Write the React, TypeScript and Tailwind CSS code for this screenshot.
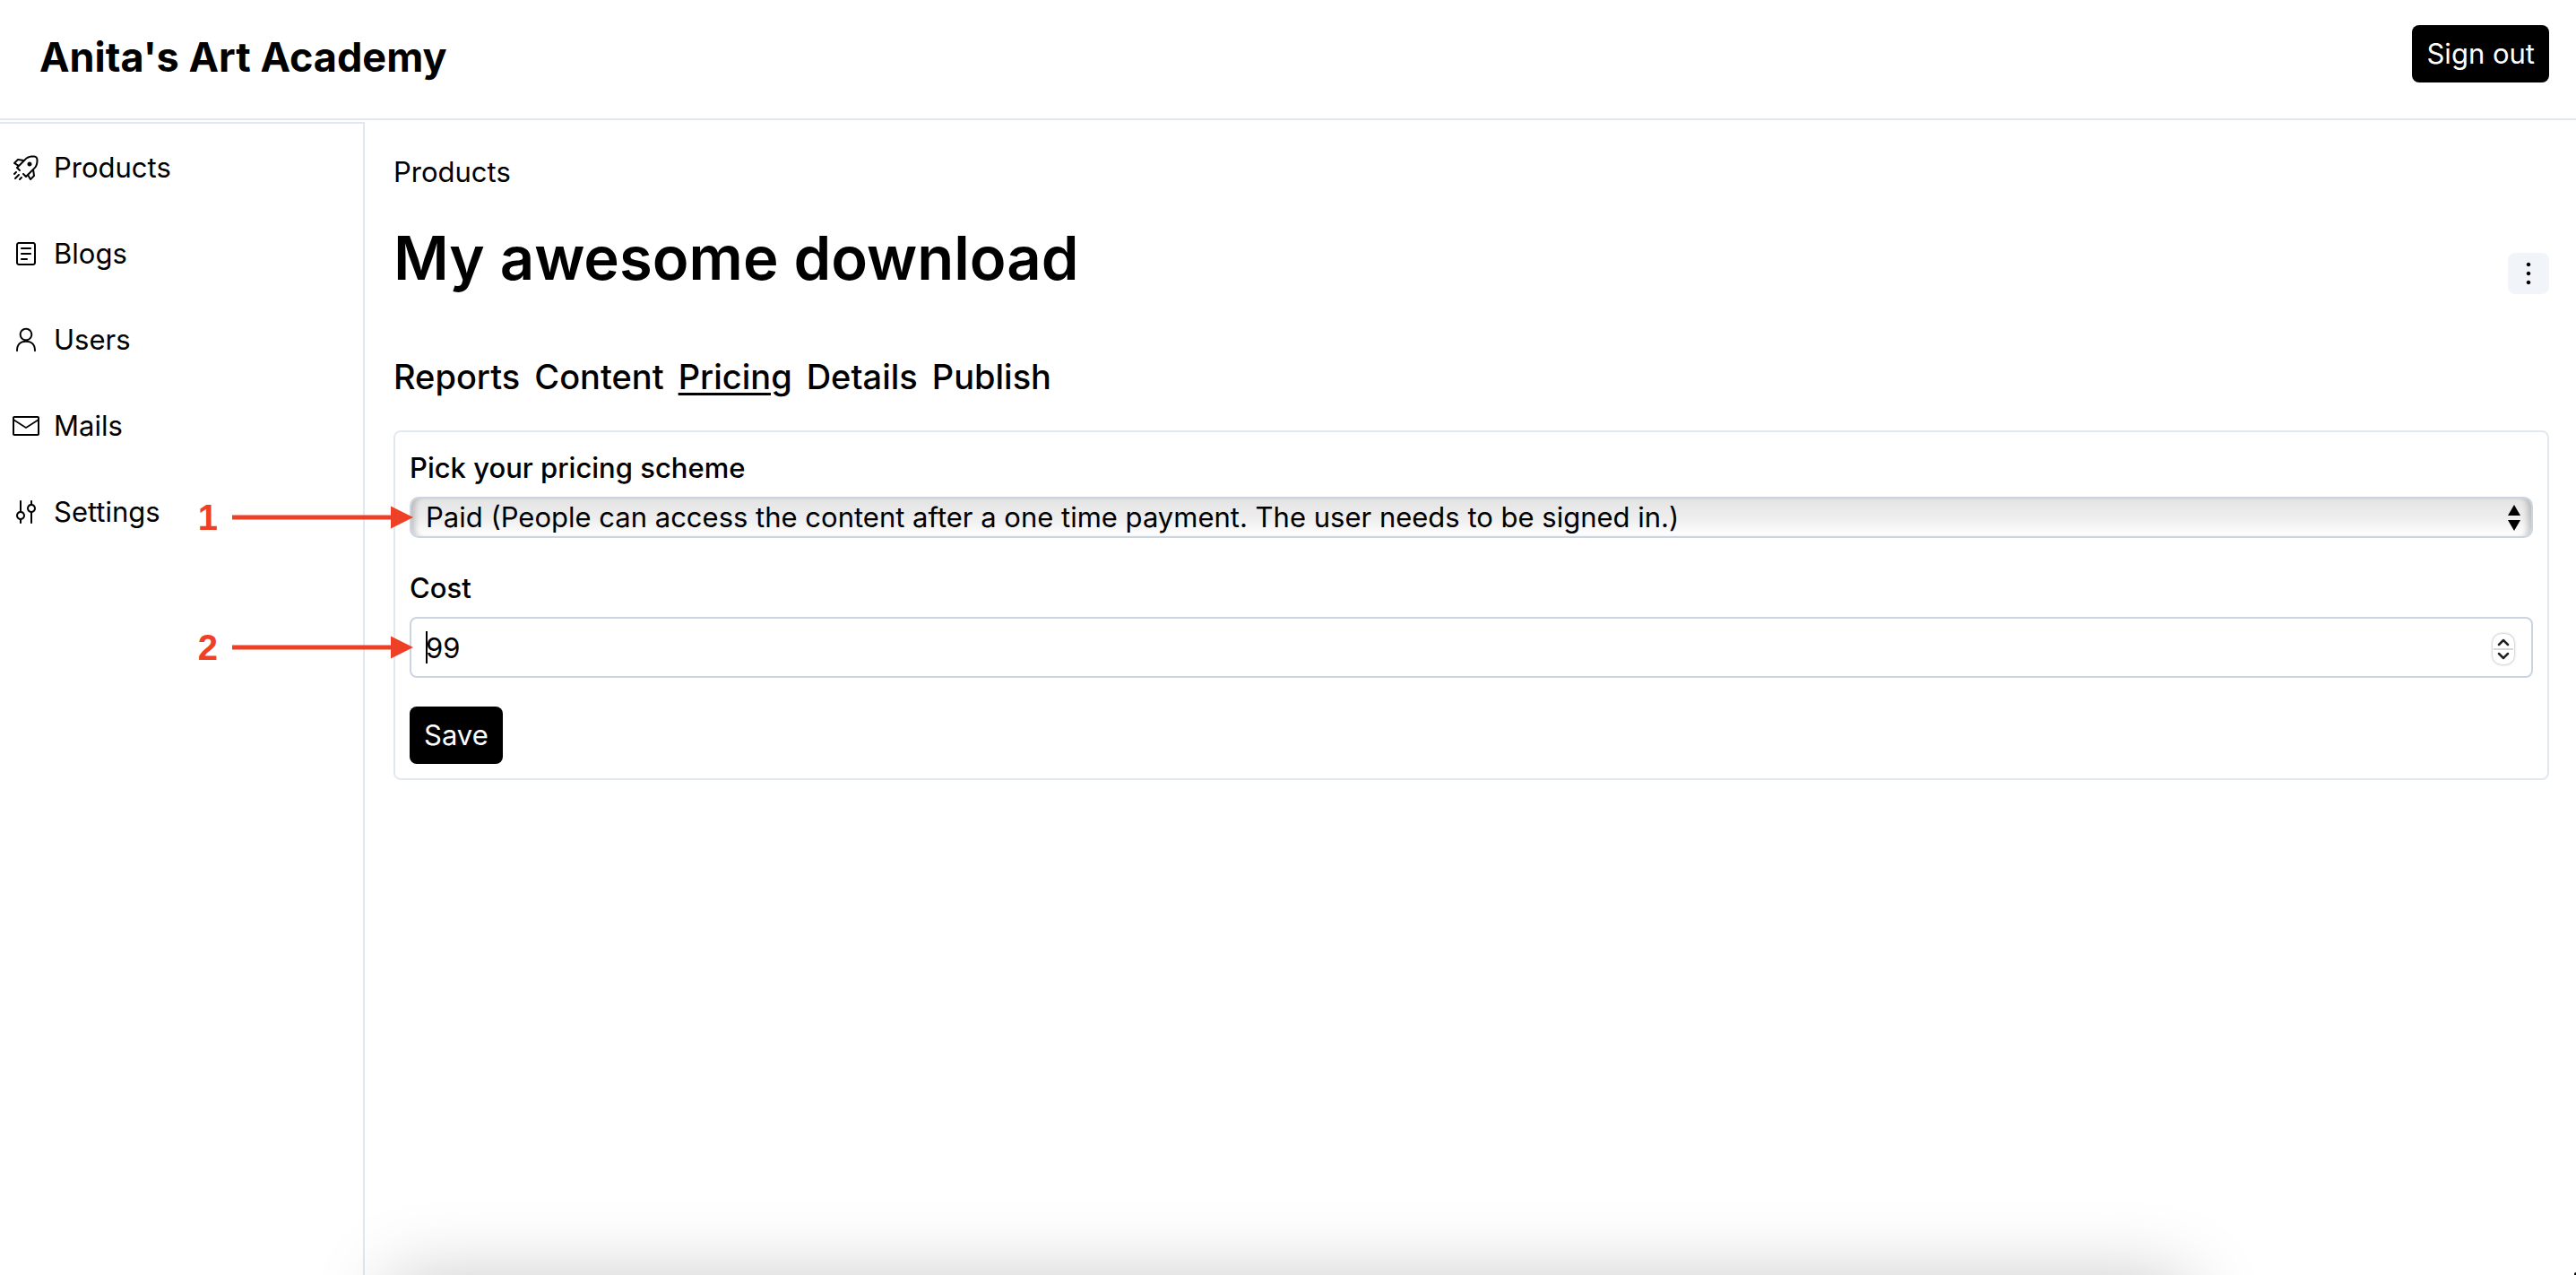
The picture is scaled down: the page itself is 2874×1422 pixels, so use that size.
import type { ComponentType, ReactNode } from "react";
import {
  RxDotsVertical,
  RxEnvelopeClosed,
  RxMixerVertical,
  RxPerson,
  RxReader,
  RxRocket,
} from "react-icons/rx";

type NavItem = { label: string; icon: ComponentType<{ size?: number }> };

const navItems: NavItem[] = [
  { label: "Products", icon: RxRocket },
  { label: "Blogs", icon: RxReader },
  { label: "Users", icon: RxPerson },
  { label: "Mails", icon: RxEnvelopeClosed },
  { label: "Settings", icon: RxMixerVertical },
];

const tabs = ["Reports", "Content", "Pricing", "Details", "Publish"];

function Header() {
  return (
    <header className="flex items-start justify-between border-b-2 border-[#e2e8f0] pt-7 pr-[30px] pb-10 pl-11">
      <a href="#home" className="mt-1 -mb-1 text-[45px] leading-[64px] font-bold">
        Anita&apos;s Art Academy
      </a>
      <button type="button" className="rounded-lg bg-black px-4 py-2 text-[31px] leading-[48px] text-white">
        Sign out
      </button>
    </header>
  );
}

function Sidebar() {
  return (
    <nav className="w-[407px] shrink-0 border-t-2 border-r-2 border-[#e2e8f0] pt-[25px]">
      <ul className="flex flex-col gap-12">
        {navItems.map(({ label, icon: Icon }) => (
          <li key={label}>
            <a href={"#" + label.toLowerCase()} className="flex items-center gap-4 pl-3.5 text-[31px] leading-[48px]">
              <Icon size={30} />
              {label}
            </a>
          </li>
        ))}
      </ul>
    </nav>
  );
}

function Callout({ label }: { label: string }) {
  return (
    <div className="pointer-events-none absolute inset-y-0 right-full z-10 -mr-1 flex items-center gap-4 text-[#ee4026]">
      <span className="font-['Liberation_Sans',sans-serif] text-[40px] leading-[40px] font-bold">{label}</span>
      <svg width="202" height="26" viewBox="0 0 202 26" fill="currentColor" aria-hidden="true">
        <rect x="0" y="10.5" width="180" height="5" />
        <path d="M177 0.5 L202 13 L177 25.5 Z" />
      </svg>
    </div>
  );
}

function Field({ id, label, callout, children }: { id: string; label: string; callout: string; children: ReactNode }) {
  return (
    <div className="flex flex-col gap-2">
      <label htmlFor={id} className="text-[31px] leading-[48px] font-medium">
        {label}
      </label>
      <div className="relative">
        <Callout label={callout} />
        {children}
      </div>
    </div>
  );
}

function PricingForm() {
  return (
    <form className="flex flex-col items-stretch gap-8 rounded-lg border-2 border-[#e2e8f0] p-4">
      <Field id="scheme" label="Pick your pricing scheme" callout="1">
        <select
          id="scheme"
          className="block h-[46px] w-full appearance-none rounded-[10px] border-2 border-[#cbd5e1] bg-linear-to-b from-[#e4e4e4] via-[#ededed] to-white px-4 text-[31px] leading-[42px] shadow-[inset_8px_0_6px_-4px_#00000033,inset_-8px_0_6px_-4px_#00000033]"
        >
          <option>
            Paid (People can access the content after a one time payment. The user needs to be signed in.)
          </option>
        </select>
        <svg
          className="pointer-events-none absolute top-[9px] right-3.5"
          width="14"
          height="29"
          viewBox="0 0 14 29"
          aria-hidden="true"
        >
          <path d="M7 0 L14 12 H0 Z M0 17 H14 L7 29 Z" />
        </svg>
      </Field>
      <Field id="cost" label="Cost" callout="2">
        <input
          id="cost"
          type="number"
          defaultValue={99}
          className="block h-[68px] w-full appearance-none rounded-lg border-2 border-[#cbd5e1] px-4 text-[31px] leading-[48px] [-moz-appearance:textfield] [&::-webkit-inner-spin-button]:appearance-none"
        />
        <span className="pointer-events-none absolute top-4 left-[18px] h-9 w-0.5 bg-black" />
        <span className="pointer-events-none absolute top-[19px] right-[21px] flex h-[34px] w-6 flex-col rounded-[10px] bg-white shadow-[0_0_3px_#00000066]">
          <svg width="24" height="34" viewBox="0 0 24 34" fill="none" aria-hidden="true">
            <path d="M1 17 H23" stroke="#d8d8d8" strokeWidth="2" />
            <path
              d="M7 12 L12 7 L17 12 M7 22 L12 27 L17 22"
              stroke="#222222"
              strokeWidth="2.5"
              strokeLinecap="round"
              strokeLinejoin="round"
            />
          </svg>
        </span>
      </Field>
      <button
        type="button"
        className="self-start rounded-lg bg-black px-4 py-2 text-[31px] leading-[48px] text-white"
      >
        Save
      </button>
    </form>
  );
}

export default function App() {
  return (
    <div className="relative flex min-h-screen flex-col overflow-hidden bg-white font-[Inter,sans-serif] text-black">
      <Header />
      <div className="mt-0.5 flex grow">
        <Sidebar />
        <main className="min-w-0 grow pt-8 pr-[30px] pl-8">
          <a href="#products" className="block text-[31px] leading-[48px]">
            Products
          </a>
          <div className="mt-8 flex items-end justify-between">
            <h1 className="text-[67px] leading-[80px] font-semibold">My awesome download</h1>
            <button type="button" aria-label="More actions" className="rounded-lg bg-[#f1f5f9] p-2">
              <RxDotsVertical size={30} />
            </button>
          </div>
          <nav className="mt-16 mb-8 flex gap-4 text-[38px] leading-[56px] font-medium">
            {tabs.map((tab) => (
              <a
                key={tab}
                href={"#" + tab.toLowerCase()}
                className={tab === "Pricing" ? "underline decoration-3 underline-offset-4" : ""}
              >
                {tab}
              </a>
            ))}
          </nav>
          <PricingForm />
        </main>
      </div>
      <div className="pointer-events-none absolute inset-x-[434px] top-full mt-1 h-40 shadow-[0_0_85px_#00000038]" />
      <div className="pointer-events-none absolute right-0 bottom-0 h-[3px] w-0.5 rounded-tl-sm bg-black" />
    </div>
  );
}
